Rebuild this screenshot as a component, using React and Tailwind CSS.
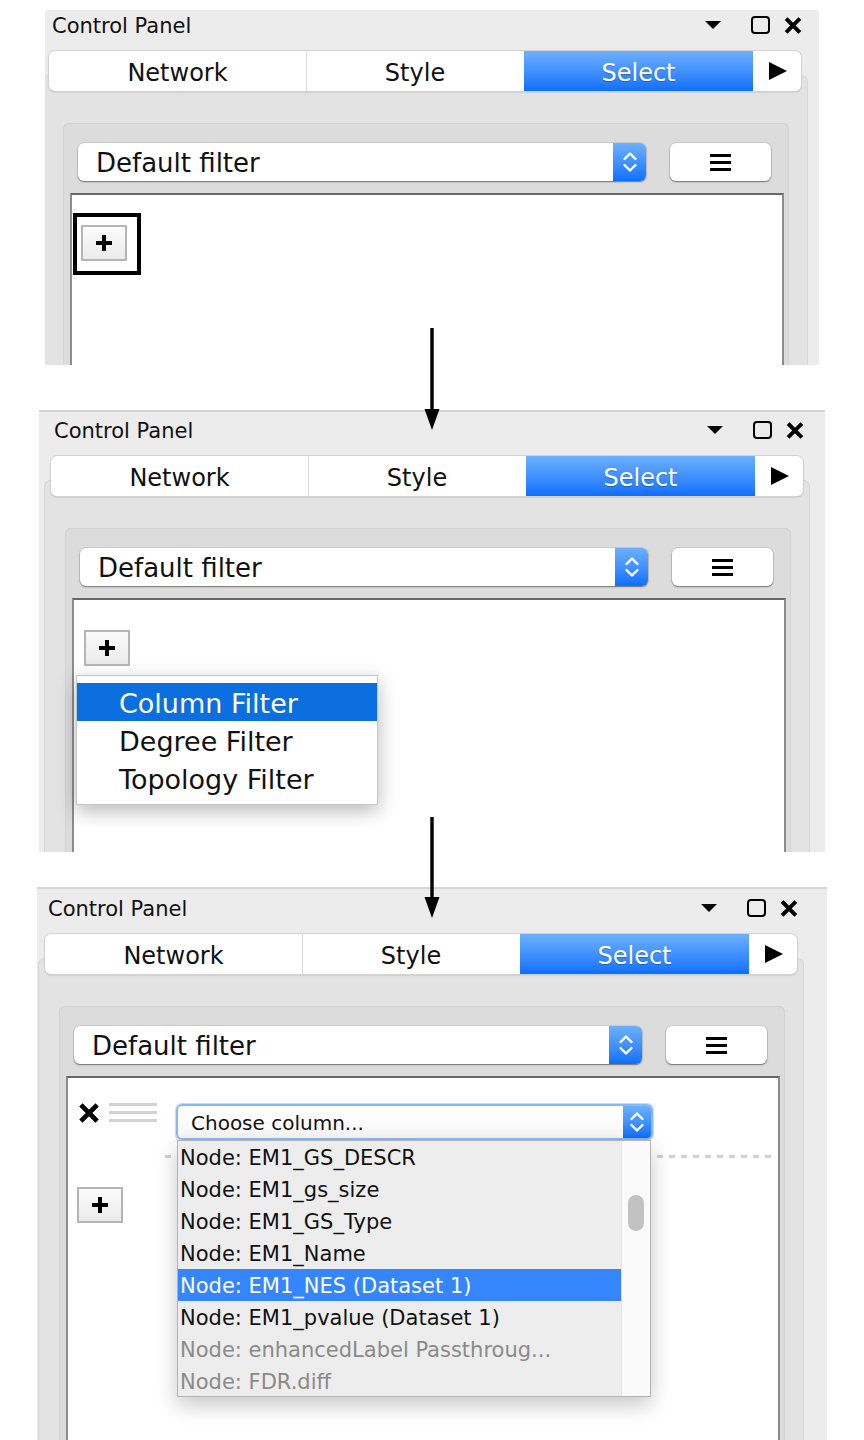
import React from "react";

const font = "font-['DejaVu_Sans',sans-serif]";

function Chevrons() {
  return (
    <svg width="16" height="24" viewBox="0 0 16 24" fill="none" stroke="#fff" strokeWidth="2.4" strokeLinecap="round" strokeLinejoin="round">
      <path d="M2.5 9L8 3.5L13.5 9" />
      <path d="M2.5 15L8 20.5L13.5 15" />
    </svg>
  );
}

function XIcon({ w = 18, h = 17 }) {
  return (
    <svg width={w} height={h} viewBox="0 0 20 20" fill="none">
      <path d="M3.5 3.5L16.5 16.5M16.5 3.5L3.5 16.5" stroke="#000" strokeWidth="4.6" strokeLinecap="square" />
    </svg>
  );
}

function PlusIcon() {
  return (
    <svg width="16" height="16" viewBox="0 0 16 16" fill="#000">
      <rect x="6" y="0" width="4" height="16" />
      <rect x="0" y="6" width="16" height="4" />
    </svg>
  );
}

function PlusButton() {
  return (
    <div className="flex h-[36px] w-[46px] items-center justify-center border-2 border-[#b5b5b5] bg-linear-to-b from-[#fbfbfb] to-[#ebebeb]">
      <PlusIcon />
    </div>
  );
}

function TitleBar({ h }) {
  return (
    <div className={`flex shrink-0 items-end pb-[10px] ${h}`}>
      <div className="flex h-[32px] w-[753px] items-center">
        <span className="pl-[3px] pt-[4px] text-[21px] text-[#111]">Control Panel</span>
        <div className="ml-auto flex items-center">
          <svg width="16" height="8" viewBox="0 0 16 8">
            <polygon points="0,0 16,0 8,8" fill="#000" />
          </svg>
          <div className="ml-[30px] h-[18px] w-[19px] rounded-[4px] border-2 border-black" />
          <div className="ml-[14px] flex">
            <XIcon />
          </div>
        </div>
      </div>
    </div>
  );
}

function Tabs() {
  return (
    <div className="relative z-10 flex h-[40px] w-[752px] shrink-0 overflow-hidden rounded-[6px] bg-white text-[24px] text-[#111] shadow-[0_0_0_1px_#d2d2d2,0_1px_1.5px_rgba(0,0,0,0.35)]">
      <div className="flex w-[258px] items-center justify-center border-r border-[#dadada] pt-[3px]">Network</div>
      <div className="flex w-[216px] items-center justify-center pt-[3px]">Style</div>
      <div className="flex w-[230px] items-center justify-center border-l border-white bg-linear-to-b from-[#6cb0fd] to-[#0a6ffd] pt-[3px] text-white [text-shadow:0_1px_1px_rgba(0,0,0,0.25)]">
        Select
      </div>
      <div className="flex w-[48px] items-center justify-center border-l border-white">
        <svg width="18" height="18" viewBox="0 0 18 18">
          <polygon points="0,0 18,9 0,18" fill="#000" />
        </svg>
      </div>
    </div>
  );
}

function Dropdown() {
  return (
    <div className="flex h-[38px] w-[568px] overflow-hidden rounded-[6px] bg-white shadow-[0_0_0_1px_rgba(0,0,0,0.07),0_1px_1.5px_rgba(0,0,0,0.45)]">
      <div className="flex flex-1 items-center pl-[18px] pt-[3px] text-[26px] text-[#111]">Default filter</div>
      <div className="flex w-[33px] items-center justify-center bg-linear-to-b from-[#6cb0fd] to-[#0a6ffd]">
        <Chevrons />
      </div>
    </div>
  );
}

function MenuButton() {
  return (
    <div className="ml-[24px] flex h-[38px] w-[101px] flex-col items-center justify-center gap-[4px] rounded-[6px] bg-white shadow-[0_0_0_1px_rgba(0,0,0,0.07),0_1px_1.5px_rgba(0,0,0,0.45)]">
      <div className="h-[3px] w-[21px] bg-black" />
      <div className="h-[3px] w-[21px] bg-black" />
      <div className="h-[3px] w-[21px] bg-black" />
    </div>
  );
}

function Panel({ outer, header, pad, children }) {
  return (
    <div className={`flex shrink-0 flex-col overflow-hidden bg-[#ececec] ${outer}`}>
      <div className={`flex flex-1 flex-col ${pad}`}>
        <TitleBar h={header} />
        <Tabs />
        <div className="-ml-[7px] -mt-[16px] flex w-[766px] flex-1 flex-col rounded-t-[7px] bg-[#e3e3e3] pl-[21px] pt-[48px] shadow-[inset_0_1px_0_#d8d8d8,inset_1px_0_0_#d8d8d8,inset_-1px_0_0_#d8d8d8]">
          <div className="flex w-[726px] flex-1 flex-col rounded-t-[6px] bg-[#dcdcdc] shadow-[inset_0_1px_0_#d3d3d3,inset_1px_0_0_#d3d3d3,inset_-1px_0_0_#d3d3d3]">
            <div className="flex pl-[15px] pt-[20px]">
              <Dropdown />
              <MenuButton />
            </div>
            <div className="relative ml-[7px] mt-[12px] flex w-[714px] flex-1 flex-col border-x-2 border-t-2 border-x-[#8c8c8c] border-t-[#686868] bg-white">
              {children}
            </div>
          </div>
        </div>
      </div>
    </div>
  );
}

function Arrow({ top, h }) {
  return (
    <svg className="absolute left-[424px] z-20" style={{ top }} width="16" height={h} viewBox={`0 0 16 ${h}`}>
      <rect x="6.3" y="0" width="3.4" height={h - 18} fill="#000" />
      <polygon points={`0.5,${h - 21} 15.5,${h - 21} 8,${h}`} fill="#000" />
    </svg>
  );
}

const listItems = [
  { t: "Node: EM1_GS_DESCR" },
  { t: "Node: EM1_gs_size" },
  { t: "Node: EM1_GS_Type" },
  { t: "Node: EM1_Name" },
  { t: "Node: EM1_NES (Dataset 1)", sel: true },
  { t: "Node: EM1_pvalue (Dataset 1)" },
  { t: "Node: enhancedLabel Passthroug...", dis: true },
  { t: "Node: FDR.diff", dis: true },
];

export default function App() {
  return (
    <div className={`relative h-[1440px] w-[864px] overflow-hidden bg-white ${font}`}>
      <div className="flex flex-col pt-[10px]">
        {/* Panel 1 */}
        <Panel outer="ml-[45px] h-[355px] w-[774px]" header="h-[41px]" pad="pl-[4px]">
          <div className="ml-[1px] mt-[18px] h-[62px] w-[68px] border-[4px] border-black pl-[4px] pt-[8px]">
            <PlusButton />
          </div>
        </Panel>

        {/* Panel 2 */}
        <Panel outer="ml-[39px] mt-[45px] h-[442px] w-[786px] border-t-2 border-[#d5d5d5]" header="h-[44px]" pad="pl-[12px]">
          <div className="ml-[10px] mt-[30px]">
            <PlusButton />
          </div>
          <div className="absolute left-[2px] top-[75px] h-[130px] w-[302px] border border-[#c6c6c6] bg-white pt-[7px] text-[27px] text-[#111] shadow-[0_6px_18px_rgba(0,0,0,0.28)]">
            <div className="flex h-[38px] items-center bg-[#0b6fe0] pl-[42px] pt-[4px] text-white">Column Filter</div>
            <div className="flex h-[38px] items-center pl-[42px] pt-[4px]">Degree Filter</div>
            <div className="flex h-[38px] items-center pl-[42px] pt-[4px]">Topology Filter</div>
          </div>
        </Panel>

        {/* Panel 3 */}
        <Panel outer="ml-[37px] mt-[35px] h-[553px] w-[790px] border-t-2 border-[#d5d5d5]" header="h-[45px]" pad="pl-[8px]">
          <div className="ml-[11px] mt-[25px] flex items-start">
            <XIcon w={20} h={20} />
            <div className="ml-[10px] flex flex-col gap-[5px]">
              <div className="h-[3px] w-[48px] bg-[#d3d3d3]" />
              <div className="h-[3px] w-[48px] bg-[#d3d3d3]" />
              <div className="h-[3px] w-[48px] bg-[#d3d3d3]" />
            </div>
            <div className="ml-[19px] mt-[1px] flex h-[36px] w-[477px] overflow-hidden rounded-[6px] border-2 border-[#89b8f0] bg-linear-to-b from-white to-[#f7f7f7] shadow-[0_0_0_1px_rgba(120,170,240,0.45)]">
              <div className="flex flex-1 items-center pl-[13px] pt-[2px] text-[20px] text-[#111]">Choose column...</div>
              <div className="flex w-[28px] items-center justify-center bg-linear-to-b from-[#6cb0fd] to-[#0a6ffd]">
                <Chevrons />
              </div>
            </div>
          </div>
          <div className="ml-[97px] mt-[15px] h-[3px] w-[607px] bg-[repeating-linear-gradient(90deg,#d0d0d0_0_6px,transparent_6px_12px)]" />
          <div className="ml-[9px] mt-[29px]">
            <PlusButton />
          </div>
          <div className="absolute left-[109px] top-[62px] flex h-[257px] w-[474px] border border-[#b3b3b3] bg-[#ededed] shadow-[0_8px_20px_rgba(0,0,0,0.22)]">
            <div className="flex flex-1 flex-col text-[21px]">
              {listItems.map((it) => (
                <div
                  key={it.t}
                  className={`flex h-[32px] items-center whitespace-nowrap pl-[2px] pt-[4px] ${
                    it.sel ? "bg-[#3586fd] text-white" : it.dis ? "text-[#8a8a8a]" : "text-[#111]"
                  }`}
                >
                  {it.t}
                </div>
              ))}
            </div>
            <div className="relative w-[29px] border-l border-[#e4e4e4] bg-[#fafafa]">
              <div className="absolute left-[6px] top-[54px] h-[36px] w-[16px] rounded-full bg-[#c2c2c2]" />
            </div>
          </div>
        </Panel>
      </div>

      <Arrow top={328} h={102} />
      <Arrow top={817} h={101} />
    </div>
  );
}
